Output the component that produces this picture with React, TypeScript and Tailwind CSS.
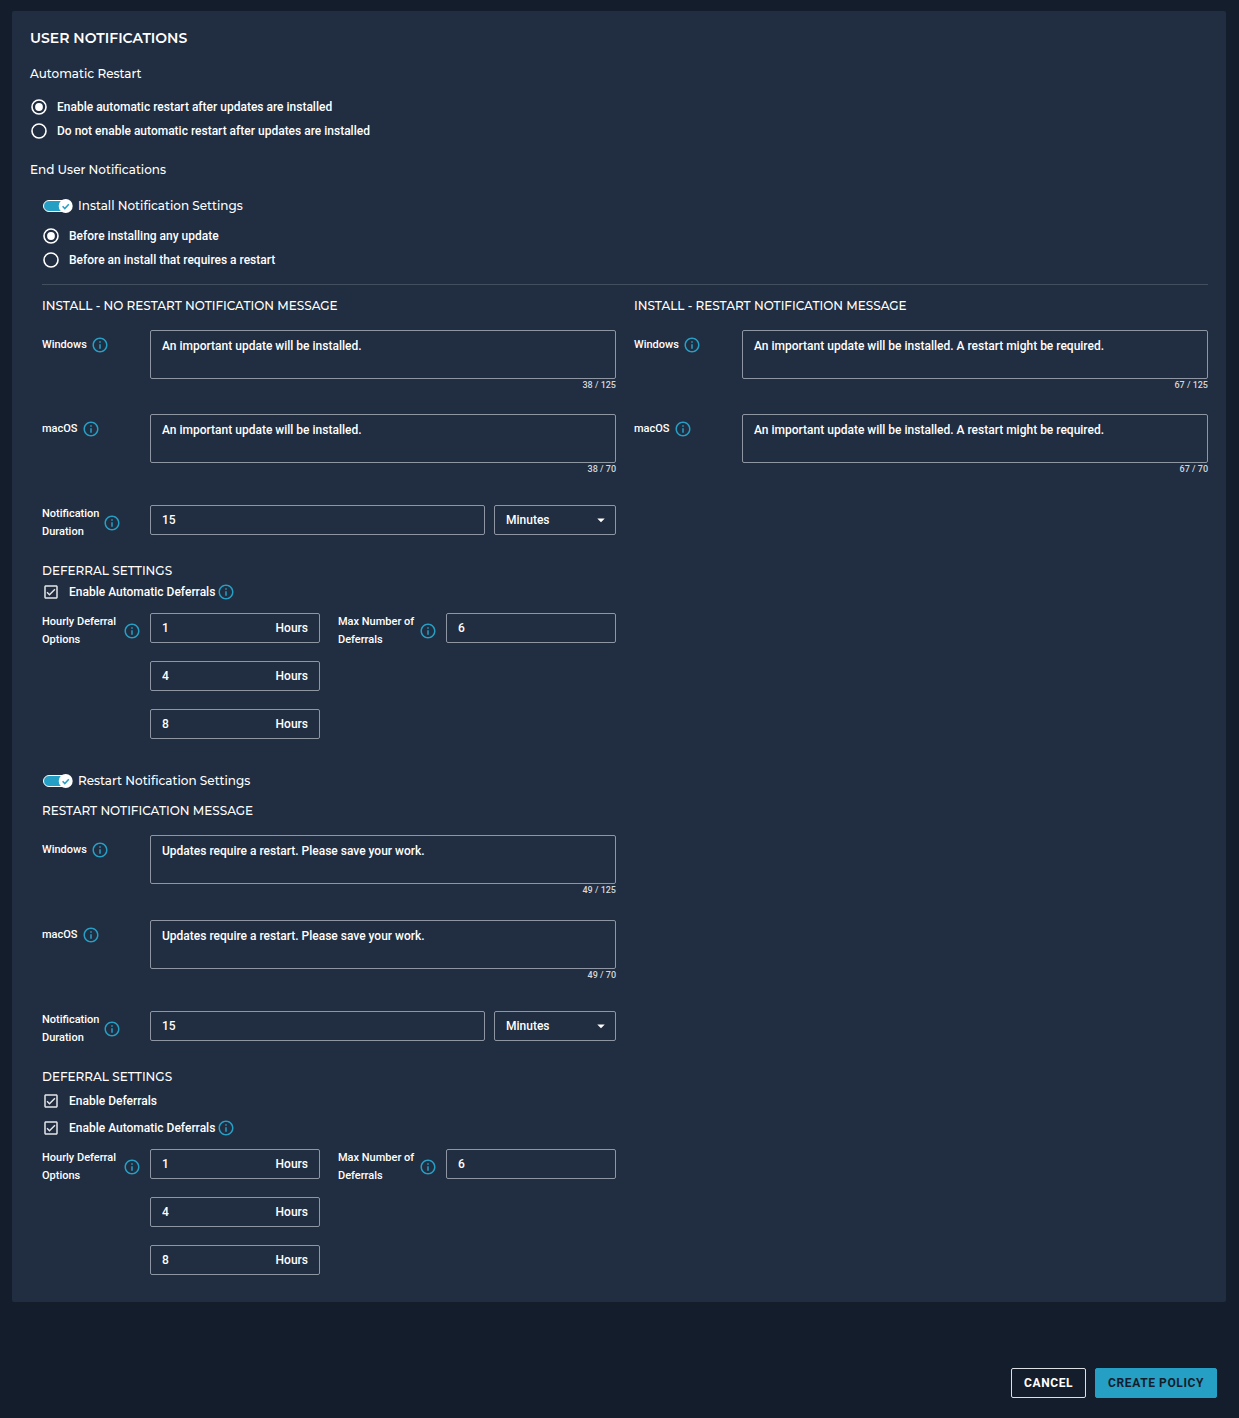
import { useId, useState } from 'react';
import type { ReactNode } from 'react';
import { MdArrowDropDown, MdInfoOutline, MdOutlineCheckBox, MdOutlineCheckBoxOutlineBlank } from 'react-icons/md';

const headingFont = "font-['Montserrat','Inter',sans-serif]";

function Info({ topic }: { topic: string }) {
  return (
    <button type="button" aria-label={`About ${topic}`} className="shrink-0 text-[#269fc5]">
      <MdInfoOutline className="size-[18px]" />
    </button>
  );
}

function Radio({ name, label, defaultChecked }: { name: string; label: string; defaultChecked?: boolean }) {
  return (
    <label className="flex h-6 items-center gap-[9px]">
      <span className="grid size-[18px]">
        <input
          type="radio"
          name={name}
          defaultChecked={defaultChecked}
          className="peer col-start-1 row-start-1 size-[18px] appearance-none rounded-full"
        />
        <svg
          viewBox="0 0 18 18"
          className="pointer-events-none col-start-1 row-start-1 size-[18px] peer-checked:[&_.dot]:opacity-100"
        >
          <circle cx="9" cy="9" r="7" fill="none" stroke="#fff" strokeWidth="1.6" />
          <circle className="dot opacity-0" cx="9" cy="9" r="3.9" fill="#fff" />
        </svg>
      </span>
      {label}
    </label>
  );
}

function Checkbox({ label, info }: { label: string; info?: boolean }) {
  const [on, setOn] = useState(true);
  const Icon = on ? MdOutlineCheckBox : MdOutlineCheckBoxOutlineBlank;
  return (
    <div className="flex h-[18px] items-center gap-0.5">
      <label className="flex items-center gap-[9px]">
        <span className="grid size-[18px]">
          <input
            type="checkbox"
            checked={on}
            onChange={(e) => setOn(e.target.checked)}
            className="col-start-1 row-start-1 size-[18px] appearance-none"
          />
          <Icon className="pointer-events-none col-start-1 row-start-1 size-[18px] text-[#e3e5e8]" />
        </span>
        {label}
      </label>
      {info && <Info topic={label} />}
    </div>
  );
}

function Toggle({ label }: { label: string }) {
  const [on, setOn] = useState(true);
  return (
    <label className={`flex h-[18px] items-center gap-1 text-[12px] ${headingFont}`}>
      <span className="grid h-[18px] w-8">
        <input
          type="checkbox"
          role="switch"
          checked={on}
          onChange={(e) => setOn(e.target.checked)}
          className="col-start-1 row-start-1 h-[18px] w-8 appearance-none"
        />
        <svg viewBox="0 0 32 18" className="pointer-events-none col-start-1 row-start-1 h-[18px] w-8">
          <rect x="1.5" y="3.5" width="28" height="11" rx="5.5" fill={on ? '#269fc5' : '#5b6675'} stroke="#fff" />
          <circle cx={on ? 23.7 : 8} cy="9" r="7" fill="#fff" />
          {on && <path d="M20.6 9.3l2.2 2.3 4-4.4" fill="none" stroke="#269fc5" strokeWidth="1.5" />}
        </svg>
      </span>
      {label}
    </label>
  );
}

function Heading({ children }: { children: ReactNode }) {
  return <h3 className={`text-[12px] leading-[18px] ${headingFont}`}>{children}</h3>;
}

function FieldLabel({ id, topic, children }: { id: string; topic: string; children: ReactNode }) {
  return (
    <div className="flex w-[108px] shrink-0 items-center gap-1 self-start pr-[9px] text-[11px]">
      <label htmlFor={id}>{children}</label>
      <Info topic={topic} />
    </div>
  );
}

function Message({ label, text, max, count }: { label: string; text: string; max: number; count: number }) {
  const id = useId();
  const [value, setValue] = useState(text);
  return (
    <div className="flex">
      <div className="pt-1.5">
        <FieldLabel id={id} topic={label}>
          {label}
        </FieldLabel>
      </div>
      <div className="flex min-w-0 flex-1 flex-col">
        <textarea
          id={id}
          value={value}
          onChange={(e) => setValue(e.target.value)}
          className="h-[49px] resize-none rounded-xs border border-[#8d96a2] px-[11px] py-1.5"
        />
        <span className="text-right text-[9px] leading-3 text-[#d3d7dc]">
          {count + value.length - text.length} / {max}
        </span>
      </div>
    </div>
  );
}

function Duration() {
  const id = useId();
  return (
    <div className="flex">
      <FieldLabel id={id} topic="Notification Duration">
        Notification
        <br />
        Duration
      </FieldLabel>
      <div className="flex min-w-0 flex-1 gap-[9px]">
        <input
          id={id}
          defaultValue="15"
          className="h-[30px] min-w-0 flex-1 rounded-xs border border-[#8d96a2] px-[11px]"
        />
        <div className="grid h-[30px] w-[122px]">
          <select
            aria-label="Duration unit"
            className="col-start-1 row-start-1 appearance-none rounded-xs border border-[#8d96a2] px-[11px]"
          >
            <option>Minutes</option>
            <option>Hours</option>
          </select>
          <MdArrowDropDown className="pointer-events-none col-start-1 row-start-1 mr-1.5 size-[18px] self-center justify-self-end" />
        </div>
      </div>
    </div>
  );
}

function DeferralOptions() {
  const hoursId = useId();
  const maxId = useId();
  return (
    <div className="grid grid-cols-2 gap-[18px]">
      <div className="flex">
        <FieldLabel id={hoursId} topic="Hourly Deferral Options">
          Hourly Deferral Options
        </FieldLabel>
        <div className="flex min-w-0 flex-1 flex-col gap-[18px]">
          {['1', '4', '8'].map((hours, i) => (
            <div key={hours} className="flex h-[30px] items-center rounded-xs border border-[#8d96a2] px-[11px]">
              <input
                id={i === 0 ? hoursId : undefined}
                aria-label={i === 0 ? undefined : `Hourly deferral option ${i + 1}`}
                defaultValue={hours}
                className="min-w-0 flex-1"
              />
              <span>Hours</span>
            </div>
          ))}
        </div>
      </div>
      <div className="flex">
        <FieldLabel id={maxId} topic="Max Number of Deferrals">
          Max Number of Deferrals
        </FieldLabel>
        <input
          id={maxId}
          defaultValue="6"
          className="h-[30px] min-w-0 flex-1 rounded-xs border border-[#8d96a2] px-[11px]"
        />
      </div>
    </div>
  );
}

const installText = 'An important update will be installed.';
const installRestartText = 'An important update will be installed. A restart might be required.';
const restartText = 'Updates require a restart. Please save your work.';

export default function App() {
  return (
    <div className="min-h-screen bg-[#141d2b] pt-[11px] pb-5 font-['Roboto',sans-serif] text-[12px] leading-[18px] font-medium text-white">
      <main className="mr-[13px] ml-3 rounded-xs bg-[#212d40] px-[18px] pt-[18px] pb-[27px]">
        <h1 className={`text-[14px] font-semibold ${headingFont}`}>USER NOTIFICATIONS</h1>

        <h2 className={`mt-[18px] text-[12px] ${headingFont}`}>Automatic Restart</h2>
        <div className="mt-3">
          <Radio name="auto-restart" label="Enable automatic restart after updates are installed" defaultChecked />
          <Radio name="auto-restart" label="Do not enable automatic restart after updates are installed" />
        </div>

        <h2 className={`mt-[18px] text-[12px] ${headingFont}`}>End User Notifications</h2>

        <section className="mt-[18px] pl-3">
          <Toggle label="Install Notification Settings" />
          <div className="mt-[9px]">
            <Radio name="install-when" label="Before installing any update" defaultChecked />
            <Radio name="install-when" label="Before an install that requires a restart" />
          </div>
          <hr className="mt-3 border-[#434e5e]" />

          <div className="mt-3 grid grid-cols-2 gap-[18px]">
            <div>
              <Heading>INSTALL - NO RESTART NOTIFICATION MESSAGE</Heading>
              <div className="mt-[15px] flex flex-col gap-[23px]">
                <Message label="Windows" text={installText} count={38} max={125} />
                <Message label="macOS" text={installText} count={38} max={70} />
              </div>
              <div className="mt-[30px] mb-[21px]">
                <Duration />
              </div>
              <Heading>DEFERRAL SETTINGS</Heading>
              <div className="mt-[3px] mb-3">
                <Checkbox label="Enable Automatic Deferrals" info />
              </div>
              <DeferralOptions />
            </div>
            <div>
              <Heading>INSTALL - RESTART NOTIFICATION MESSAGE</Heading>
              <div className="mt-[15px] flex flex-col gap-[23px]">
                <Message label="Windows" text={installRestartText} count={67} max={125} />
                <Message label="macOS" text={installRestartText} count={67} max={70} />
              </div>
            </div>
          </div>
        </section>

        <section className="mt-[33px] pl-3">
          <Toggle label="Restart Notification Settings" />
          <div className="mt-3 grid grid-cols-2 gap-[18px]">
            <div>
              <Heading>RESTART NOTIFICATION MESSAGE</Heading>
              <div className="mt-[15px] flex flex-col gap-6">
                <Message label="Windows" text={restartText} count={49} max={125} />
                <Message label="macOS" text={restartText} count={49} max={70} />
              </div>
              <div className="mt-[30px] mb-[21px]">
                <Duration />
              </div>
              <Heading>DEFERRAL SETTINGS</Heading>
              <div className="mt-1.5 mb-3 flex flex-col gap-[9px]">
                <Checkbox label="Enable Deferrals" />
                <Checkbox label="Enable Automatic Deferrals" info />
              </div>
              <DeferralOptions />
            </div>
          </div>
        </section>
      </main>

      <footer className="mt-[66px] mr-[22px] flex justify-end gap-[9px] text-[12px] font-bold tracking-wider">
        <button type="button" className="h-[30px] rounded-xs border border-[#dcdfe3] px-3">
          CANCEL
        </button>
        <button type="button" className="h-[30px] rounded-xs border border-[#269fc5] bg-[#269fc5] px-3 text-[#141d2b]">
          CREATE POLICY
        </button>
      </footer>
    </div>
  );
}
